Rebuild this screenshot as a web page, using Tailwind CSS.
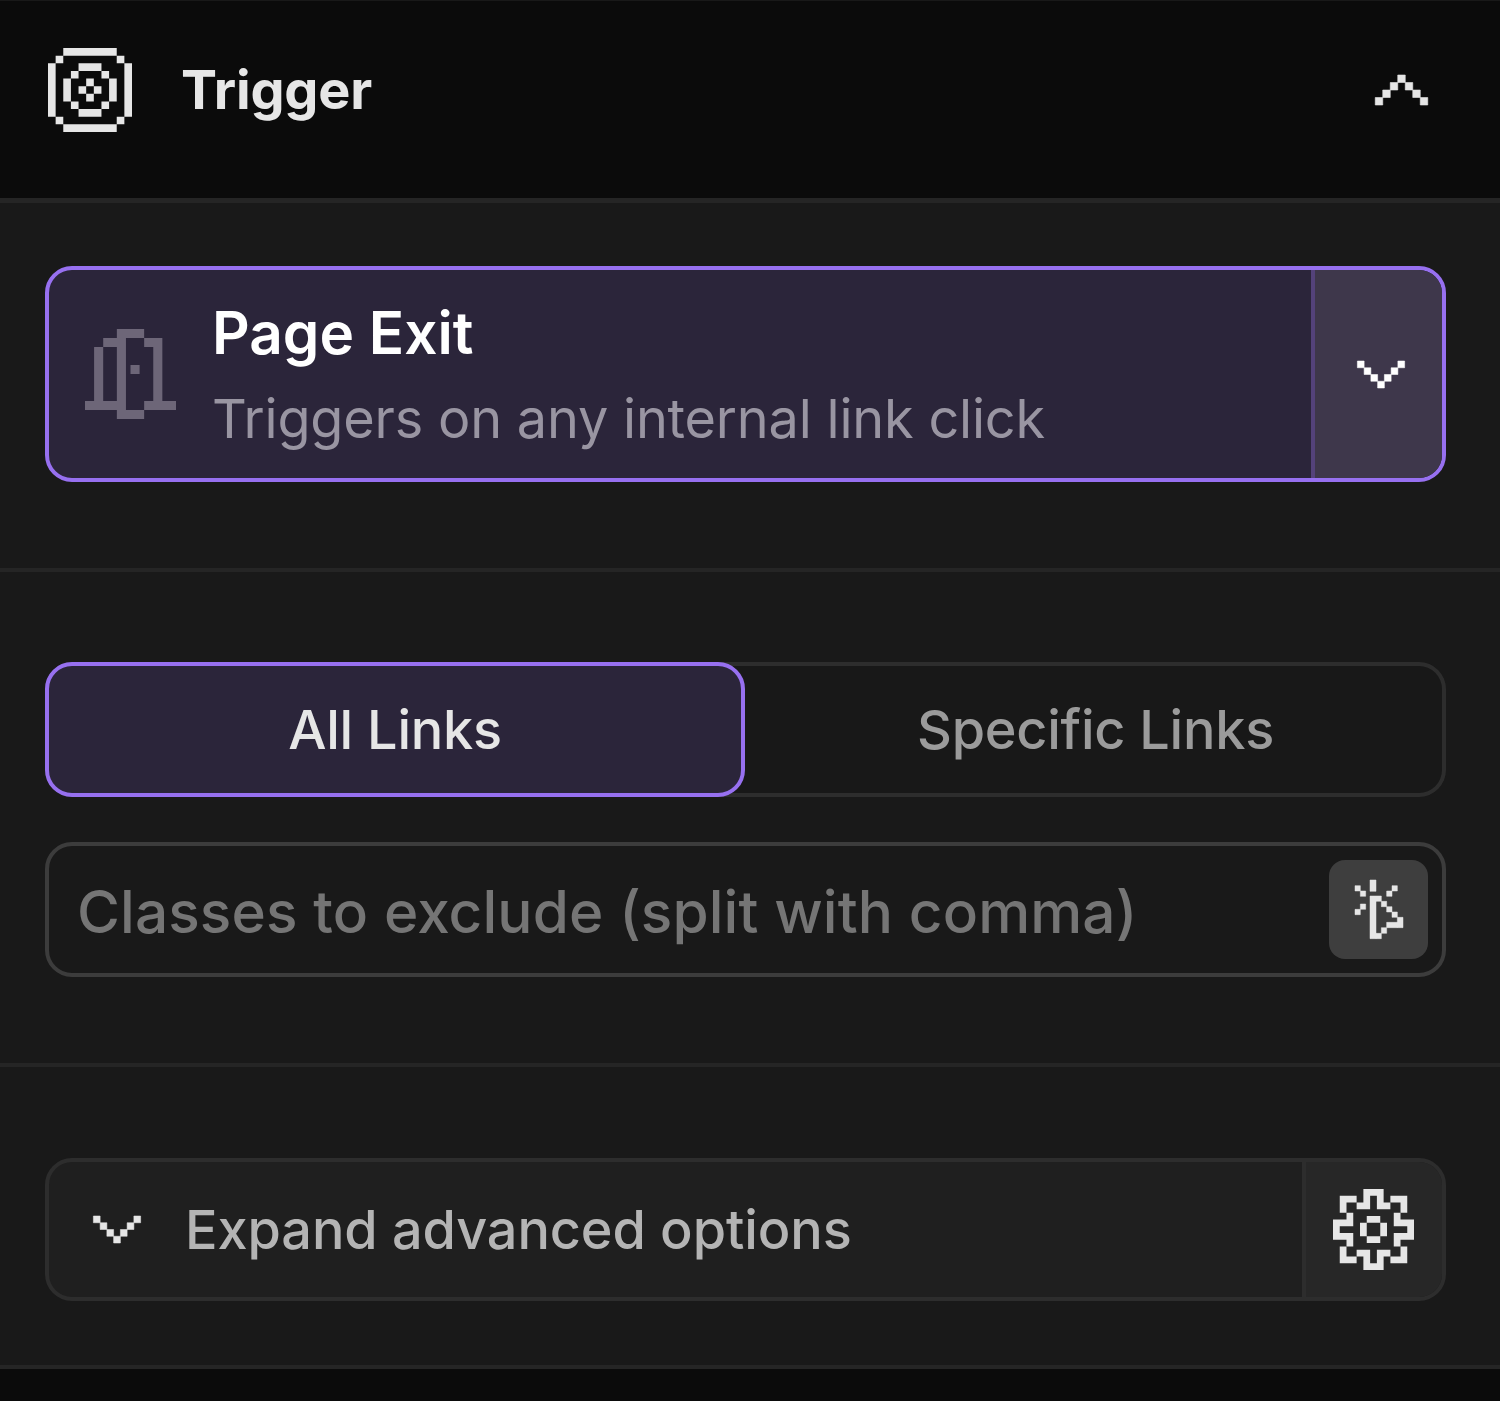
<!DOCTYPE html>
<html lang="en">
<head>
    <meta charset="UTF-8" />
    <meta name="viewport" content="width=device-width, initial-scale=1.0">
    <title>Trigger</title>
    <script src="https://cdn.jsdelivr.net/npm/@tailwindcss/browser@4"></script>
</head>
<body class="bg-[#0b0b0b] font-['Inter','Liberation_Sans',sans-serif] text-[54px] leading-[66px] text-[#e6e6e6] w-[1500px] h-[1401px] overflow-hidden">

    <!-- Header -->
    <header class="flex items-center h-[198px] pl-12 pr-[72px] pb-[20px] border-t border-[#191919]">
        <svg class="w-[84px] h-[84px]" viewBox="0 0 11 11" fill="currentColor" aria-hidden="true">
            <path d="M2 0h7v1H2zM2 10h7v1H2zM0 2h1v7H0zM10 2h1v7h-1zM1 1h1v1H1zM9 1h1v1H9zM1 9h1v1H1zM9 9h1v1H9z"/>
            <path d="M4 2h3v1H4zM4 8h3v1H4zM2 4h1v3H2zM8 4h1v3H8zM3 3h1v1H3zM7 3h1v1H7zM3 7h1v1H3zM7 7h1v1H7z"/>
            <path d="M5 4h1v1H5zM4 5h1v1H4zM6 5h1v1H6zM5 6h1v1H5z"/>
        </svg>
        <h1 class="ml-[49px] font-bold tracking-[-0.2px]">Trigger</h1>
        <svg class="ml-auto w-[53px] h-[30px] mt-[1px] overflow-visible" viewBox="0 0 7 4" fill="currentColor" stroke="currentColor" stroke-width="0.08" aria-hidden="true">
            <path d="M3 0h1v1H3zM2 1h1v1H2zM4 1h1v1H4zM1 2h1v1H1zM5 2h1v1H5zM0 3h1v1H0zM6 3h1v1H6z"/>
        </svg>
    </header>

    <main class="bg-[#191919] border-b-[4px] border-[#252525]">
        <!-- Selected trigger -->
        <section class="h-[370px] pl-[45px] pr-[54px] pt-[63px] border-t-[5px] border-[#252525]">
            <div class="flex h-[216px] rounded-[27px] border-[4.5px] border-[#9770f0] bg-[#2b253a] overflow-hidden">
                <div class="flex flex-1 items-center pl-[36px]">
                    <svg class="w-[91px] h-[90px] text-[#6d6678]" viewBox="0 0 20 20" fill="currentColor" preserveAspectRatio="none" aria-hidden="true">
                        <path d="M7 0h6v2H7zM4 2h3v2H4zM13 2h4v2h-4zM2 4h2v12H2zM7 2h2v16H7zM15 4h2v12h-2zM10 8h2v2h-2zM0 16h7v2H0zM13 16h7v2h-7zM7 18h6v2H7z"/>
                    </svg>
                    <div class="ml-[36px] pt-[4px]">
                        <h2 class="text-[58.5px] leading-[66px] font-semibold text-white">Page Exit</h2>
                        <p class="mt-[20px] tracking-[-0.2px] text-[#9995a2]">Triggers on any internal link click</p>
                    </div>
                </div>
                <button class="flex items-center justify-center w-[131px] pl-[4px] border-l-[4.5px] border-[#54427a] bg-[#3e374b] text-white">
                    <svg class="w-[48px] h-[27px] overflow-visible" viewBox="0 0 7 4" fill="currentColor" stroke="currentColor" stroke-width="0.08" aria-hidden="true">
                        <path d="M0 0h1v1H0zM6 0h1v1H6zM1 1h1v1H1zM5 1h1v1H5zM2 2h1v1H2zM4 2h1v1H4zM3 3h1v1H3z"/>
                    </svg>
                </button>
            </div>
        </section>

        <!-- Link filter -->
        <section class="h-[495px] pl-[45px] pr-[54px] pt-[90px] border-t-[4px] border-[#252525]">
            <div class="flex h-[135px] rounded-[27px] bg-[#181818] inset-ring-[4px] inset-ring-[#2d2d2d] font-medium tracking-[-0.25px]">
                <button class="w-[700px] rounded-[27px] border-[4.5px] border-[#9770f0] bg-[#2b253a]">All Links</button>
                <button class="flex-1 text-[#9b9b9b]">Specific Links</button>
            </div>
            <div class="flex items-center justify-between h-[135px] mt-[45px] pl-[28px] pr-[14px] rounded-[27px] border-[4.5px] border-[#3c3c3c]">
                <span class="pt-[5px] text-[58.5px] font-medium tracking-[0.12px] text-[#757575]">Classes to exclude (split with comma)</span>
                <button class="flex items-center justify-center w-[99px] h-[99px] rounded-[16px] bg-[#3e3e3e]">
                    <svg class="w-[49px] h-[59px] overflow-visible" viewBox="101 92 147 177" fill="currentColor" stroke="currentColor" stroke-width="1.5" aria-hidden="true">
                        <path d="M149 92h18v34h-18zM104 109h16v16h-16zM120 125h16v16h-16zM215 109h16v16h-16zM199 125h16v16h-16zM120 164h16v16h-16zM104 180h16v16h-16z"/>
                        <path d="M149 140h18v128h-18zM167 140h16v16h-16zM183 156h16v16h-16zM199 172h16v16h-16zM215 188h16v16h-16zM231 204h17v31h-17zM199 219h32v16h-32zM183 235h16v17h-16zM167 252h16v16h-16z"/>
                    </svg>
                </button>
            </div>
        </section>

        <!-- Advanced options -->
        <section class="h-[302px] pl-[45px] pr-[54px] pt-[91px] border-t-[4px] border-[#252525]">
            <div class="flex h-[143px] rounded-[27px] border-[4.5px] border-[#2d2d2d] bg-[#1f1f1f] overflow-hidden">
                <div class="flex flex-1 items-center pl-[44px]">
                    <svg class="w-[48px] h-[27px] overflow-visible" viewBox="0 0 7 4" fill="currentColor" stroke="currentColor" stroke-width="0.08" aria-hidden="true">
                        <path d="M0 0h1v1H0zM6 0h1v1H6zM1 1h1v1H1zM5 1h1v1H5zM2 2h1v1H2zM4 2h1v1H4zM3 3h1v1H3z"/>
                    </svg>
                    <span class="ml-[44px] pt-[1px] font-medium tracking-[-0.08px] text-[#b4b4b4]">Expand advanced options</span>
                </div>
                <button class="flex items-center justify-center w-[140px] pr-[1px] pb-[1px] border-l-[4.5px] border-[#2d2d2d] bg-[#272727]">
                    <svg class="w-[81px] h-[81px]" viewBox="0 0 24 24" fill="currentColor" aria-hidden="true">
                        <path d="M9 0h6v2H9zM9 2h2v4H9zM13 2h2v4h-2zM7 4h2v2H7zM15 4h2v2h-2z"/>
                        <path d="M9 22h6v2H9zM9 18h2v4H9zM13 18h2v4h-2zM7 18h2v2H7zM15 18h2v2h-2z"/>
                        <path d="M0 9h6v2H0zM0 11h2v2H0zM0 13h6v2H0zM4 7h2v2H4zM4 15h2v2H4z"/>
                        <path d="M18 9h6v2h-6zM22 11h2v2h-2zM18 13h6v2h-6zM18 7h2v2h-2zM18 15h2v2h-2z"/>
                        <path d="M2 2h5v2H2zM2 4h2v3H2zM17 2h5v2h-5zM20 4h2v3h-2zM2 20h5v2H2zM2 17h2v3H2zM17 20h5v2h-5zM20 17h2v3h-2z"/>
                        <path d="M10 8h4v2h-4zM10 14h4v2h-4zM8 10h2v4H8zM14 10h2v4h-2z"/>
                    </svg>
                </button>
            </div>
        </section>
    </main>

</body>
</html>
